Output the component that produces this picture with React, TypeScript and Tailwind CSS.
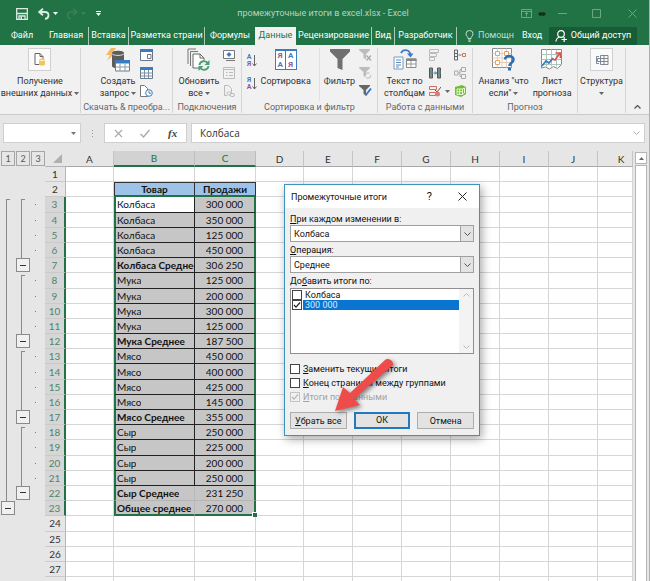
import React from 'react';
import { clsx } from 'clsx';

interface SheetRow {
  name: string;
  value: string;
  total?: boolean;
}

const rows: SheetRow[] = [
  { name: 'Колбаса', value: '300 000' },
  { name: 'Колбаса', value: '350 000' },
  { name: 'Колбаса', value: '125 000' },
  { name: 'Колбаса', value: '450 000' },
  { name: 'Колбаса Среднее', value: '306 250', total: true },
  { name: 'Мука', value: '125 000' },
  { name: 'Мука', value: '200 000' },
  { name: 'Мука', value: '300 000' },
  { name: 'Мука', value: '125 000' },
  { name: 'Мука Среднее', value: '187 500', total: true },
  { name: 'Мясо', value: '450 000' },
  { name: 'Мясо', value: '400 000' },
  { name: 'Мясо', value: '425 000' },
  { name: 'Мясо', value: '145 000' },
  { name: 'Мясо Среднее', value: '355 000', total: true },
  { name: 'Сыр', value: '250 000' },
  { name: 'Сыр', value: '225 000' },
  { name: 'Сыр', value: '200 000' },
  { name: 'Сыр', value: '250 000' },
  { name: 'Сыр Среднее', value: '231 250', total: true },
  { name: 'Общее среднее', value: '270 000', total: true },
];

const FIRST = 3;
const LAST = FIRST + rows.length - 1;
const ROW_COUNT = 27;

const columns = [
  { id: 'A', width: 'w-12' },
  { id: 'B', width: 'w-[81px]' },
  { id: 'C', width: 'w-[61px]' },
  { id: 'D', width: 'w-12' },
  { id: 'E', width: 'w-[49px]' },
  { id: 'F', width: 'w-[49px]' },
  { id: 'G', width: 'w-[49px]' },
  { id: 'H', width: 'w-[49px]' },
  { id: 'I', width: 'w-[49px]' },
  { id: 'J', width: 'w-[49px]' },
  { id: 'K', width: 'flex-1 min-w-0' },
];

const tabs = [
  { label: 'Файл', width: 'w-11' },
  { label: 'Главная', width: 'w-[45px]', line: true },
  { label: 'Вставка', width: 'w-10', line: true },
  { label: 'Разметка страни', width: 'w-[76px]', line: true },
  { label: 'Формулы', width: 'w-[50px]' },
  { label: 'Данные', width: 'w-[41px]', active: true },
  { label: 'Рецензирование', width: 'w-[76px]', line: true },
  { label: 'Вид', width: 'w-[23px]', line: true },
  { label: 'Разработчик', width: 'w-[62px]', line: true },
];

const Caret = ({ className }: { className?: string }) => (
  <svg viewBox="0 0 5 3" className={clsx('inline-block h-[3px] w-[5px] shrink-0', className)}>
    <path d="M0 0h5L2.500 3z" fill="currentColor" />
  </svg>
);

/* ---------- title bar ---------- */

const TitleBar = () => (
  <header className="flex h-[27px] items-center text-white">
    <div className="flex w-[170px] items-center pl-4">
      <button aria-label="Сохранить">
        <svg viewBox="0 0 12 12" className="h-3 w-3" fill="none" stroke="#dcebe2" strokeWidth="1.300">
          <path d="M.7.7h10.6v10.6H.7zM1 5.500h10M3 11V8h6v3" />
          <path d="M4.500 8.500h1.500v2.500H4.500z" fill="#dcebe2" stroke="none" />
        </svg>
      </button>
      <button aria-label="Отменить" className="ml-[10px] flex items-center">
        <svg viewBox="0 0 12 12" className="h-3 w-3" fill="none" stroke="#dcebe2" strokeWidth="1.800">
          <path d="M5 .8 1.200 4 5 7.200M1.500 4h5.200c5 0 5 6.400.3 6.800" />
        </svg>
        <Caret className="ml-[3px]" />
      </button>
      <button aria-label="Повторить" className="ml-2 flex items-center text-[#3c8059]">
        <svg viewBox="0 0 12 12" className="h-3 w-3" fill="none" stroke="currentColor" strokeWidth="1.500">
          <path d="M7 .8 10.800 4 7 7.200M10.500 4H5.300c-5 0-5 6.400-.3 6.800" />
        </svg>
        <Caret className="ml-[3px]" />
      </button>
      <button aria-label="Настройка панели" className="ml-[10px] flex flex-col items-center gap-px">
        <span className="h-px w-[5px] bg-white" />
        <Caret />
      </button>
    </div>
    <h1 className="flex-1 text-center text-[9px] text-[#b5d3c2]">промежуточные итоги в excel.xlsx - Excel</h1>
    <div className="flex w-[173px] items-center justify-end pr-3 text-[#6fa587]">
      <button aria-label="Параметры ленты">
        <svg viewBox="0 0 11 9" className="h-[9px] w-[11px]" fill="none" stroke="currentColor">
          <path d="M.5.5h10v8H.5zM.5 2.500h10M5.500 7.500v-4M4 5l1.500-1.500L7 5" />
        </svg>
      </button>
      <svg viewBox="0 0 8 4" className="ml-[6px] h-1 w-2" fill="#14301f">
        <path d="M0 2l2-2h1l1 1 1-1h1l2 2-2 2H5L4 3 3 4H2z" />
      </svg>
      <button aria-label="Свернуть" className="ml-3">
        <svg viewBox="0 0 9 9" className="h-[9px] w-[9px]" stroke="currentColor">
          <path d="M0 4.500h9" />
        </svg>
      </button>
      <button aria-label="Развернуть" className="ml-[25px]">
        <svg viewBox="0 0 9 9" className="h-[9px] w-[9px]" fill="none" stroke="currentColor">
          <path d="M.5.5h8v8h-8z" />
        </svg>
      </button>
      <button aria-label="Закрыть" className="ml-[27px]">
        <svg viewBox="0 0 9 9" className="h-[9px] w-[9px]" stroke="currentColor">
          <path d="M.5.5l8 8M8.500.5l-8 8" />
        </svg>
      </button>
    </div>
  </header>
);

const TabStrip = () => (
  <nav className="flex h-[18px] items-stretch text-[9px] whitespace-nowrap text-white">
    {tabs.map((tab) => (
      <button
        key={tab.label}
        className={clsx(
          'flex shrink-0 items-center justify-center',
          tab.width,
          tab.line && 'border-r border-[#a9cbb8]',
          tab.active && 'bg-[#f1f1f1] text-[#217346]'
        )}
      >
        {tab.label}
      </button>
    ))}
    <button className="flex shrink-0 items-center gap-1 pl-2 text-[#c4dccf]">
      <svg viewBox="0 0 9 12" className="h-3 w-[9px]" fill="none" stroke="currentColor">
        <path d="M3 8.500C3 6.500 1 6 1 3.800a3.500 3.300 0 0 1 7 0C8 6 6 6.500 6 8.500zM3 10h3M3.500 11.500h2" />
      </svg>
      Помощн
    </button>
    <button className="ml-2 shrink-0">Вход</button>
    <button className="mr-3 ml-auto flex w-[88px] shrink-0 items-center justify-center gap-1 bg-[#185c37]">
      <svg viewBox="0 0 12 12" className="h-3 w-3" fill="none" stroke="white" strokeWidth="1.200">
        <circle cx="6" cy="4" r="3.300" />
        <path d="M.8 11.500c.4-2.500 1.500-3.700 3.200-4.500M6.500 9.500H12M9.200 7v5" />
      </svg>
      Общий доступ
    </button>
  </nav>
);

/* ---------- ribbon ---------- */

interface GroupProps {
  title?: string;
  className?: string;
  children: React.ReactNode;
}

const Group = ({ title, className, children }: GroupProps) => (
  <section className={clsx('flex shrink-0 flex-col border-r border-[#d5d5d5]', className)}>
    <div className="flex flex-1 justify-center">{children}</div>
    <div className="h-3 text-center text-[9px] leading-3 whitespace-nowrap text-[#666]">{title}</div>
  </section>
);

interface BigButtonProps {
  icon: React.ReactNode;
  lines: string[];
  caret?: boolean;
  framed?: boolean;
}

const BigButton = ({ icon, lines, caret, framed }: BigButtonProps) => (
  <button className="flex flex-col items-center text-[9px] leading-3 whitespace-nowrap text-[#333]">
    <span
      className={clsx(
        'mb-1 flex h-[23px] items-center justify-center',
        framed && 'w-[23px] border border-[#d0d0d0] bg-[#fafafa]'
      )}
    >
      {icon}
    </span>
    {lines.map((line, i) => (
      <span key={line || i} className="flex h-3 items-center justify-center">
        {line}
        {caret && i === lines.length - 1 && <Caret className={line ? 'ml-[2px] text-[#666]' : 'text-[#666]'} />}
      </span>
    ))}
  </button>
);

const SmallColumn = ({ children }: { children: React.ReactNode }) => (
  <div className="flex flex-col gap-[6px] pt-px">{children}</div>
);

const ImportIcon = () => (
  <svg viewBox="0 0 14 14" className="h-[14px] w-[14px]" fill="none">
    <path d="M2 .5h5l3 3v8H2z" fill="#fff" stroke="#666" />
    <path d="M7 .5v3h3" stroke="#666" />
    <path d="M6 6.500c0-1.500 6-1.500 6 0v5c0 1.500-6 1.500-6 0z" fill="#efc75e" />
    <path d="M6 6.700c0 1.200 6 1.200 6 0" stroke="#fff" strokeWidth=".7" />
  </svg>
);

const QueryIcon = () => (
  <svg viewBox="0 0 25 24" className="h-6 w-[25px]">
    <path d="M5 0h5L6.500 5H9L1 13l3-6H0z" fill="#f2b95f" />
    <path d="M6 5c0-3 12-3 12 0v13c0 3-12 3-12 0z" fill="#5c5c5c" />
    <path d="M6 5.500c0 2.500 12 2.500 12 0" fill="none" stroke="#ddd" />
    <path d="M9.500 12.500h14v10.500h-14z" fill="#fff" stroke="#6b7c90" />
    <path d="M9 12h15v3.500H9z" fill="#3b7bc0" />
    <path d="M14 15.500V23M19 15.500V23M10 19h13.500" stroke="#8a9aad" />
  </svg>
);

const TableIcon = ({ pane }: { pane?: boolean }) => (
  <svg viewBox="0 0 13 12" className="h-3 w-[13px]" fill="none">
    <path d="M.5.5h12v11H.5z" fill="#fff" stroke="#68788a" />
    <path d="M0 0h13v3H0z" fill="#3b7bc0" />
    {pane ? (
      <path d="M7.500 5.500h3.500v4H7.500z" stroke="#777" />
    ) : (
      <path d="M4.500 3v8.500M8.500 3v8.500M.5 6h12M.5 9h12" stroke="#7c8ea3" />
    )}
  </svg>
);

const RecentIcon = () => (
  <svg viewBox="0 0 13 12" className="h-3 w-[13px]" fill="none">
    <path d="M.5.5h4l3 3v8h-7z" fill="#fff" stroke="#777" />
    <circle cx="9" cy="8" r="3.300" fill="#fff" stroke="#3b7bc0" />
    <path d="M9 6v2.200h2" stroke="#3b7bc0" />
  </svg>
);

const RefreshIcon = () => (
  <svg viewBox="0 0 23 24" className="h-6 w-[23px]" fill="none">
    <path d="M1 16V1h8M3.500 18V3.500H11" stroke="#777" />
    <path d="M6 6h7l4 4v10H6z" fill="#fff" stroke="#666" />
    <path d="M13 6v4h4" stroke="#666" />
    <circle cx="17" cy="17.500" r="5.500" fill="#f1f1f1" />
    <path d="M12.500 17c.5-4.500 6.500-5 8.500-1.500M21.500 18c-.5 4.500-6.500 5-8.500 1.500" stroke="#4d9e73" strokeWidth="1.800" />
    <path d="M22.500 12v5h-5zM11.500 23v-5h5z" fill="#4d9e73" />
  </svg>
);

const LinkIcon = ({ kind }: { kind: 'conn' | 'props' | 'links' }) => (
  <svg viewBox="0 0 12 12" className="h-3 w-3" fill="none" stroke={kind === 'conn' ? '#777' : '#bbb'}>
    {kind === 'conn' && (
      <>
        <path d="M.5 1.500h11v8H.5z" fill="#fff" />
        <path d="M6 3l2.500 2.500L6 8 3.500 5.500z" fill="#3b7bc0" stroke="none" />
        <path d="M3 11.500h9" />
      </>
    )}
    {kind === 'props' && <path d="M.5.5h11v11H.5zM.5 2.500h11M3 5.500h1.500M3 8.500h1.500M6 5.500h4M6 8.500h4" />}
    {kind === 'links' && (
      <>
        <path d="M1.500.5h4l3 3v5M1.500.5v10H4" />
        <rect x="4" y="7" width="4" height="3" rx="1.500" />
        <rect x="7" y="8.500" width="4.500" height="3" rx="1.500" />
      </>
    )}
  </svg>
);

const SortArrow = ({ up, down }: { up: string; down: string }) => (
  <button className="flex h-[14px] items-center" aria-label="Сортировать">
    <span className="flex flex-col text-[7px] leading-[7px] font-bold">
      <span className="text-[#4a79b8]">{up}</span>
      <span className="text-[#8a5aa0]">{down}</span>
    </span>
    <svg viewBox="0 0 5 12" className="h-3 w-[5px]" fill="none" stroke="#666">
      <path d="M2.500 0v11M.5 8.500l2 2.500 2-2.500" />
    </svg>
  </button>
);

const SortIcon = () => (
  <span className="grid h-[21px] w-[22px] grid-cols-2 border border-t-2 border-[#3b7bc0] bg-white text-center text-[8px] leading-[9px] font-bold">
    <span className="border-r border-[#3b7bc0] text-[#8a5aa0]">Я</span>
    <span className="text-[#4a79b8]">А</span>
    <span className="border-r border-[#3b7bc0] text-[#4a79b8]">А</span>
    <span className="text-[#8a5aa0]">Я</span>
  </span>
);

const Funnel = () => (
  <svg viewBox="0 0 20 21" className="h-[21px] w-5">
    <path d="M0 0h20v2.500l-7.500 7.500V21L7.500 19v-9L0 2.500z" fill="#707070" />
  </svg>
);

const FilterSmall = ({ kind }: { kind: 'clear' | 'again' | 'extra' }) => (
  <svg viewBox="0 0 13 12" className="h-3 w-[13px]" fill="none">
    <path d="M0 0h11v1L7 5v5.500L4.500 9V5L0 1z" fill={kind === 'extra' ? '#666' : '#bcbcbc'} />
    {kind === 'clear' && <path d="M7.500 6.500l4.500 5M12 6.500l-4.500 5" stroke="#aaa" strokeWidth="1.300" />}
    {kind === 'again' && <circle cx="9" cy="8.500" r="2.700" fill="#f1f1f1" stroke="#b5b5b5" strokeDasharray="6 2" />}
    {kind === 'extra' && <path d="M6.500 10.500l5.500-7" stroke="#3b7bc0" strokeWidth="2" />}
  </svg>
);

const TextColumnsIcon = () => (
  <svg viewBox="0 0 24 21" className="h-[21px] w-6" fill="none">
    <path d="M8 4c2-4 8-4 9.500 1.500" stroke="#3b7bc0" strokeWidth="1.800" />
    <path d="M14 4.500h6.500l-3 4z" fill="#3b7bc0" />
    <path d="M1 8h9v12H1z" fill="#fff" stroke="#7d97b5" />
    <path d="M3 11h5M3 13.500h5M3 16h5M3 18h3" stroke="#5689c0" />
    <path d="M13.500 10h9.500v8.500h-9.500z" fill="#fff" stroke="#888" />
    <path d="M13 9.500h10.500V12H13z" fill="#888" />
    <path d="M18 12v6.500M14 15h9" stroke="#999" />
  </svg>
);

const ToolIcon = ({ kind }: { kind: number }) => (
  <svg viewBox="0 0 12 12" className="h-3 w-3" fill="none">
    {kind === 0 && <path d="M.5.5h9v3h-9zM.5 4.500h7v3h-7zM.5 8.500h5v3h-5z" stroke="#bbb" />}
    {kind === 1 && (
      <>
        <path d="M.5 1h3v10h-3zM8.500 1h3v10h-3z" fill="#888" stroke="#555" />
        <path d="M1 4h2.500v3H1zM9 4h2.500v3H9z" fill="#4d9e73" />
        <path d="M4.500 6h3M6 4.500L7.500 6 6 7.500" stroke="#3b7bc0" />
      </>
    )}
    {kind === 2 && (
      <>
        <path d="M.5 1.500h7v3h-7zM.5 7.500h6v3h-6z" stroke="#d36a5f" />
        <path d="M6 5l2 2 4-5" stroke="#555" />
        <circle cx="8.500" cy="9" r="2.500" fill="#e07a72" />
      </>
    )}
    {kind === 3 && (
      <>
        <path d="M.5 1h3v10h-3zM.5 4.500h3M.5 7.500h3" stroke="#666" />
        <path d="M4.500 6h3" stroke="#3b7bc0" />
        <path d="M8.500 4.500h3v3h-3z" stroke="#d07a5a" />
      </>
    )}
    {kind === 4 && (
      <path
        d="M.5 4h3.500v4H.5zM7.500.5h4v4h-4zM7.500 7.500h4v4h-4zM4 6h2M6 2.500v7M6 2.500h1.500M6 9.500h1.500"
        stroke="#aaa"
      />
    )}
    {kind === 5 && (
      <>
        <path d="M1 2l7-2 4 2v7l-5 3-6-2z" fill="#6fbf2f" />
        <path d="M3 4h5.500v5.500H3zM3 6.700h5.500M5.700 4v5.500M8.500 4L10.500 3v5l-2 1.500" stroke="#e9f7d8" />
      </>
    )}
  </svg>
);

const WhatIfIcon = () => (
  <svg viewBox="0 0 23 23" className="h-[23px] w-[23px]" fill="none">
    <path d="M.5.5h19v19H.5z" fill="#fff" stroke="#8a8a8a" />
    <path d="M5.500.5v19M10 .5v19M14.500.5v19M.5 5.500h19M.5 10h19M.5 14.500h19" stroke="#e3cdb8" />
    <path d="M3.500 3.500h4v4h-4zM3.500 12.500h4v4h-4zM12.500 3.500h4v4h-4z" fill="#fff" stroke="#dfa46c" />
    <path d="M13 11.500c0-4.500 8.500-4.500 8.500 0 0 3.500-4 3-4 6.500" stroke="#2f6eb5" strokeWidth="2.600" />
    <path d="M16 19.700h3V22.500h-3z" fill="#2f6eb5" />
  </svg>
);

const ForecastIcon = () => (
  <svg viewBox="0 0 22 21" className="h-[21px] w-[22px]" fill="none">
    <path d="M.5.5h20v15l-4 4-4-2-4 2.500-4-2-4 1z" fill="#fff" stroke="#888" />
    <path d="M5.500.5v17M10.500.5v17M15.500.5v17M.5 5.500h20M.5 10.500h20M.5 15.500h20" stroke="#a9c7b6" />
    <path d="M1 17l4-5 3 2 4-5" stroke="#3b7bc0" strokeWidth="1.800" />
    <path d="M11 10l3 1 5-7M14.500 4H19.500v5" stroke="#d9534a" strokeWidth="1.700" />
  </svg>
);

const StructureIcon = () => (
  <svg viewBox="0 0 14 12" className="h-3 w-[14px]" fill="none" stroke="#7d8894">
    <path d="M5.500 1.500h7.500v9H5.500zM9 1.500v9M5.500 4.500H13M5.500 7.500H13M4 2.500H1.500v7H4M2.500 4.500h3v3h-3z" />
  </svg>
);

const Ribbon = () => (
  <div className="flex h-[70px] border-b border-[#c9c9c9] bg-[#f1f1f1] pt-[3px] pb-px">
    <Group className="w-[81px]">
      <BigButton icon={<ImportIcon />} lines={['Получение', 'внешних данных']} caret framed />
    </Group>
    <Group title="Скачать & преобра..." className="w-[92px]">
      <div className="flex gap-1">
        <BigButton icon={<QueryIcon />} lines={['Создать', 'запрос']} caret />
        <SmallColumn>
          <TableIcon pane />
          <TableIcon />
          <RecentIcon />
        </SmallColumn>
      </div>
    </Group>
    <Group title="Подключения" className="w-[69px]">
      <div className="flex gap-1">
        <BigButton icon={<RefreshIcon />} lines={['Обновить', 'все']} caret />
        <SmallColumn>
          <LinkIcon kind="conn" />
          <LinkIcon kind="props" />
          <LinkIcon kind="links" />
        </SmallColumn>
      </div>
    </Group>
    <Group title="Сортировка и фильтр" className="w-[136px]">
      <div className="flex gap-1">
        <div className="flex flex-col gap-[9px] pt-[6px]">
          <SortArrow up="А" down="Я" />
          <SortArrow up="Я" down="А" />
        </div>
        <BigButton icon={<SortIcon />} lines={['Сортировка']} />
        <div className="ml-1 border-l border-[#e0e0e0] pl-1">
          <BigButton icon={<Funnel />} lines={['Фильтр']} />
        </div>
        <SmallColumn>
          <FilterSmall kind="clear" />
          <FilterSmall kind="again" />
          <FilterSmall kind="extra" />
        </SmallColumn>
      </div>
    </Group>
    <Group title="Работа с данными" className="w-[95px]">
      <div className="flex gap-1">
        <BigButton icon={<TextColumnsIcon />} lines={['Текст по', 'столбцам']} />
        <SmallColumn>
          <ToolIcon kind={0} />
          <ToolIcon kind={1} />
          <span className="flex items-center gap-1">
            <ToolIcon kind={2} />
            <Caret className="text-[#666]" />
          </span>
        </SmallColumn>
        <SmallColumn>
          <ToolIcon kind={3} />
          <ToolIcon kind={4} />
          <ToolIcon kind={5} />
        </SmallColumn>
      </div>
    </Group>
    <Group title="Прогноз" className="w-[105px]">
      <div className="flex gap-1">
        <BigButton icon={<WhatIfIcon />} lines={['Анализ "что', 'если"']} caret />
        <BigButton icon={<ForecastIcon />} lines={['Лист', 'прогноза']} />
      </div>
    </Group>
    <Group className="w-12">
      <BigButton icon={<StructureIcon />} lines={['Структура', '']} caret framed />
    </Group>
    <button aria-label="Свернуть ленту" className="flex flex-1 items-end justify-center pb-1">
      <svg viewBox="0 0 7 4" className="h-1 w-[7px]" fill="none" stroke="#555" strokeWidth="1.300">
        <path d="M.5 3.500l3-3 3 3" />
      </svg>
    </button>
  </div>
);

/* ---------- formula bar ---------- */

const FormulaBar = () => (
  <div className="flex h-9 items-center bg-[#e6e6e6] pr-1 pl-[3px]">
    <div className="flex h-5 w-[78px] items-center border border-[#cfcfcf] bg-white">
      <input aria-label="Имя ячейки" className="min-w-0 flex-1 bg-transparent px-1 text-[10px] outline-none" />
      <Caret className="mr-1 text-[#777]" />
    </div>
    <div className="flex w-[23px] flex-col items-center gap-[2px]">
      <span className="h-px w-px bg-[#999]" />
      <span className="h-px w-px bg-[#999]" />
      <span className="h-px w-px bg-[#999]" />
    </div>
    <div className="flex h-5 w-[83px] items-center justify-around border border-[#cfcfcf] bg-white">
      <button aria-label="Отмена ввода">
        <svg viewBox="0 0 9 9" className="h-[9px] w-[9px]" stroke="#aaa" strokeWidth="1.200">
          <path d="M1 1l7 7M8 1L1 8" />
        </svg>
      </button>
      <button aria-label="Ввод">
        <svg viewBox="0 0 10 9" className="h-[9px] w-[10px]" fill="none" stroke="#aaa" strokeWidth="1.400">
          <path d="M.5 5l3 3 6-7" />
        </svg>
      </button>
      <button className="font-['Liberation_Serif',serif] text-[11px] leading-none font-bold text-[#444] italic">fx</button>
    </div>
    <div className="ml-1 flex h-5 min-w-0 flex-1 items-center border border-[#cfcfcf] bg-white pr-1">
      <input
        aria-label="Строка формул"
        defaultValue="Колбаса"
        className="min-w-0 flex-1 bg-transparent px-2 font-['Open_Sans',sans-serif] text-[10px] text-[#333] outline-none"
      />
      <svg viewBox="0 0 7 4" className="h-1 w-[7px]" fill="none" stroke="#aaa">
        <path d="M.5.5l3 3 3-3" />
      </svg>
    </div>
  </div>
);

/* ---------- sheet ---------- */

const CollapseButton = () => (
  <button
    aria-label="Свернуть группу"
    className="ml-px flex h-[14px] w-[14px] items-center justify-center border border-[#8a8a8a] bg-[#f0f0f0]"
  >
    <span className="h-px w-[6px] bg-[#333]" />
  </button>
);

type Mark = 'start' | 'line' | 'button' | 'none';

const OutlineCell = ({ mark }: { mark: Mark }) => (
  <td className="flex w-[15px] shrink-0 bg-[#e6e6e6]">
    {mark === 'button' && <CollapseButton />}
    {mark === 'line' && <span className="ml-[6px] border-l border-[#8a8a8a]" />}
    {mark === 'start' && <span className="mt-[2px] ml-[6px] w-1 border-t border-l border-[#8a8a8a]" />}
  </td>
);

const outlineMarks = (n: number): [Mark, Mark] => {
  if (n < FIRST || n > LAST) return ['none', 'none'];
  if (n === LAST) return ['button', 'none'];
  const step = (n - FIRST) % 5;
  return [n === FIRST ? 'start' : 'line', step === 0 ? 'start' : step === 4 ? 'button' : 'line'];
};

const cellContent = (id: string, n: number) => {
  if (id !== 'B' && id !== 'C') return null;
  if (n === 2) return id === 'B' ? 'Товар' : 'Продажи';
  const row = rows[n - FIRST];
  return row ? (id === 'B' ? row.name : row.value) : null;
};

const cellClass = (id: string, n: number) => {
  const data = id === 'B' || id === 'C';
  if (data && n === 2) {
    return clsx(
      'justify-center border-t border-r border-b-2 border-t-[#333] border-r-[#333] border-b-[#217346] bg-[#9dc3e8] font-bold',
      id === 'B' && 'border-l border-l-[#333]'
    );
  }
  if (data && n >= FIRST && n <= LAST) {
    const plain = n >= LAST - 1;
    return clsx(
      n === LAST ? 'border-b-2 border-b-[#217346]' : plain ? 'border-b border-b-[#b4b4b4]' : 'border-b border-b-[#222]',
      id === 'B' && 'border-l-2 border-l-[#217346] pl-px',
      id === 'B' && (plain ? 'border-r border-r-[#b9b9b9]' : 'border-r border-r-[#222]'),
      id === 'C' && 'relative justify-center border-r-2 border-r-[#217346]',
      id === 'B' && rows[n - FIRST].total && 'font-bold',
      id === 'B' && n === FIRST ? 'bg-white' : 'bg-[#c6c6c6]'
    );
  }
  return 'border-r border-b border-[#d6d6d6] bg-white';
};

const Sheet = () => (
  <table className="flex min-w-0 flex-1 flex-col font-[Lato,'Open_Sans',sans-serif] text-[10px] leading-3 text-[#111]">
    <thead className="block">
      <tr className="flex h-4 bg-[#e6e6e6]">
        {['1', '2', '3'].map((level) => (
          <th key={level} className="w-[15px] shrink-0 pb-px pl-px font-normal">
            <button className="h-full w-full border border-[#a5a5a5] text-[9px] leading-none text-[#555]">{level}</button>
          </th>
        ))}
        <th className="flex w-[21px] shrink-0 items-center justify-end border-b border-[#b5b5b5] pr-1">
          <svg viewBox="0 0 9 9" className="h-[9px] w-[9px]">
            <path d="M9 0v9H0z" fill="#b0b0b0" />
          </svg>
        </th>
        {columns.map(({ id, width }) => {
          const selected = id === 'B' || id === 'C';
          return (
            <th
              key={id}
              className={clsx(
                'flex shrink-0 items-center justify-center border-r font-normal',
                width,
                selected
                  ? 'border-b-2 border-r-[#bdbdbd] border-b-[#217346] bg-[#d2d2d2] text-[#217346]'
                  : 'border-b border-r-[#c4c4c4] border-b-[#a8a8a8] text-[#333]',
                id === 'K' && 'pl-3'
              )}
            >
              {id}
            </th>
          );
        })}
      </tr>
    </thead>
    <tbody className="flex flex-1 flex-col">
      {Array.from({ length: ROW_COUNT }, (_, i) => {
        const n = i + 1;
        const selected = n >= FIRST && n <= LAST;
        const [outer, inner] = outlineMarks(n);
        const isDetail = selected && n !== LAST && inner !== 'button';
        return (
          <tr key={n} className="flex min-h-[15px] flex-1">
            <OutlineCell mark={outer} />
            <OutlineCell mark={inner} />
            <td className="flex w-[15px] shrink-0 items-center bg-[#e6e6e6] pl-[5px]">
              {isDetail && <span className="h-px w-px bg-[#777]" />}
            </td>
            <th
              scope="row"
              className={clsx(
                'flex w-[21px] shrink-0 items-center justify-center border-b border-b-[#cacaca] font-normal',
                selected
                  ? 'border-r-2 border-r-[#217346] bg-[#d6d6d6] text-[#4f8468]'
                  : 'border-r border-r-[#b5b5b5] bg-[#e6e6e6] text-[#333]'
              )}
            >
              {n}
            </th>
            {columns.map(({ id, width }) => (
              <td
                key={id}
                className={clsx('flex shrink-0 items-center whitespace-nowrap', width, cellClass(id, n))}
              >
                <span className="overflow-hidden">{cellContent(id, n)}</span>
                {id === 'C' && n === LAST && (
                  <span className="absolute -right-[3px] -bottom-[3px] h-[5px] w-[5px] border-t border-l border-white bg-[#217346]" />
                )}
              </td>
            ))}
          </tr>
        );
      })}
      <tr className="flex h-1">
        <td className="w-[45px] shrink-0 bg-[#e6e6e6]" />
        <td className="w-[21px] shrink-0 border-r border-[#b5b5b5] bg-[#e6e6e6]" />
        {columns.map(({ id, width }) => (
          <td key={id} className={clsx('shrink-0 border-r border-[#d6d6d6] bg-white', width)} />
        ))}
      </tr>
    </tbody>
  </table>
);

const ScrollBar = () => (
  <div className="flex w-4 shrink-0 flex-col bg-[#e6e6e6] px-[2px]">
    <button aria-label="Вверх" className="mt-px flex h-3 items-center justify-center border border-[#b5b5b5] bg-white">
      <Caret className="rotate-180 text-[#666]" />
    </button>
    <div className="mt-px flex-1 border-x border-t border-[#b5b5b5] bg-white" />
  </div>
);

/* ---------- subtotal dialog ---------- */

const DialogSelect = ({ id, value }: { id: string; value: string }) => (
  <div className="relative mb-[2px] flex h-[17px]">
    <select
      id={id}
      defaultValue={value}
      className="w-full appearance-none border border-[#a0a0a0] bg-white pl-[3px] text-[9px] outline-none"
    >
      <option>{value}</option>
    </select>
    <span className="pointer-events-none absolute inset-y-0 right-0 flex w-[14px] items-center justify-center border border-[#a0a0a0] bg-[#e3e3e3]">
      <svg viewBox="0 0 7 4" className="h-1 w-[7px]" fill="none" stroke="#555">
        <path d="M.5.5l3 3 3-3" />
      </svg>
    </span>
  </div>
);

interface TickProps {
  checked?: boolean;
  disabled?: boolean;
  className?: string;
  children: React.ReactNode;
}

const Tick = ({ checked, disabled, className, children }: TickProps) => (
  <label className={clsx('flex items-center whitespace-nowrap', disabled && 'text-[#a3a3a3]', className)}>
    <span className="relative flex shrink-0">
      <input
        type="checkbox"
        defaultChecked={checked}
        disabled={disabled}
        className="peer h-[10px] w-[10px] appearance-none border border-[#444] bg-white disabled:border-[#c4c4c4] disabled:bg-[#f0f0f0]"
      />
      <svg
        viewBox="0 0 10 10"
        className="pointer-events-none absolute inset-0 hidden h-[10px] w-[10px] peer-checked:block"
        fill="none"
        stroke={disabled ? '#b5b5b5' : '#222'}
        strokeWidth="1.200"
      >
        <path d="M2 5l2 2.200L8 2.500" />
      </svg>
    </span>
    {children}
  </label>
);

const SubtotalDialog = () => (
  <div
    role="dialog"
    aria-label="Промежуточные итоги"
    className="absolute top-[184px] left-[284px] w-[196px] border border-[#3d93bd] bg-[#f0f0f0] text-[9px] leading-3 text-[#111] shadow-[2px_3px_9px_rgba(0,0,0,0.35)]"
  >
    <div className="flex h-[23px] items-center bg-white pr-3 pl-[6px]">
      <h2 className="flex-1">Промежуточные итоги</h2>
      <button aria-label="Справка" className="mr-[26px] text-[11px]">
        ?
      </button>
      <button aria-label="Закрыть окно">
        <svg viewBox="0 0 9 9" className="h-[9px] w-[9px]" stroke="#222">
          <path d="M.5.5l8 8M8.500.5l-8 8" />
        </svg>
      </button>
    </div>
    <div className="px-[5px] pt-[5px] pb-[6px]">
      <label htmlFor="change" className="block">
        <u>П</u>ри каждом изменении в:
      </label>
      <DialogSelect id="change" value="Колбаса" />
      <label htmlFor="operation" className="block">
        <u>О</u>перация:
      </label>
      <DialogSelect id="operation" value="Среднее" />
      <div>
        До<u>б</u>авить итоги по:
      </div>
      <div className="mt-px flex h-[66px] border border-[#8f8f8f] bg-white leading-[10px]">
        <div className="flex-1 pt-px pl-px">
          <Tick className="h-[10px]">
            <span className="flex-1 pl-[3px]">Колбаса</span>
          </Tick>
          <Tick checked className="h-[10px]">
            <span className="ml-px flex-1 bg-[#0a74d1] pl-[2px] text-[#d8ebff]">300 000</span>
          </Tick>
        </div>
        <div className="flex w-[14px] flex-col items-center justify-between bg-[#f3f3f3] py-1">
          <svg viewBox="0 0 7 4" className="h-1 w-[7px]" fill="none" stroke="#bbb">
            <path d="M.5 3.500l3-3 3 3" />
          </svg>
          <svg viewBox="0 0 7 4" className="h-1 w-[7px]" fill="none" stroke="#bbb">
            <path d="M.5.5l3 3 3-3" />
          </svg>
        </div>
      </div>
      <div className="mt-[9px] flex flex-col gap-[2px]">
        <Tick className="h-3">
          <span className="pl-[3px]">
            <u>З</u>аменить текущие итоги
          </span>
        </Tick>
        <Tick className="h-3">
          <span className="pl-[3px]">
            <u>К</u>онец страницы между группами
          </span>
        </Tick>
        <Tick className="h-3" checked disabled>
          <span className="pl-[3px]">
            <u>И</u>тоги под данными
          </span>
        </Tick>
      </div>
      <div className="mt-[9px] grid grid-cols-3 gap-[7px]">
        <button className="h-[17px] border border-[#adadad] bg-[#e3e3e3]">
          <u>У</u>брать все
        </button>
        <button className="h-[17px] border-2 border-[#2379bd] bg-[#e3e3e3] leading-none">ОК</button>
        <button className="h-[17px] border border-[#adadad] bg-[#e3e3e3]">Отмена</button>
      </div>
    </div>
  </div>
);

const Arrow = () => (
  <svg
    viewBox="0 0 64 60"
    className="pointer-events-none absolute top-[356px] left-[332px] h-[60px] w-16 drop-shadow-[2px_2px_2px_rgba(0,0,0,0.45)]"
  >
    <path d="M3 55L11 31l7 6L53 4c3-3 9 1 8 5L22 43l6 6z" fill="#ee4b4b" />
  </svg>
);

export default function App() {
  return (
    <div className="relative flex min-h-screen flex-col overflow-hidden border-r border-[#b0b0b0] bg-[#e6e6e6] font-[Roboto,'Open_Sans',sans-serif]">
      <div className="bg-[#217346]">
        <TitleBar />
        <TabStrip />
      </div>
      <Ribbon />
      <FormulaBar />
      <main className="flex flex-1">
        <Sheet />
        <ScrollBar />
      </main>
      <SubtotalDialog />
      <Arrow />
    </div>
  );
}
